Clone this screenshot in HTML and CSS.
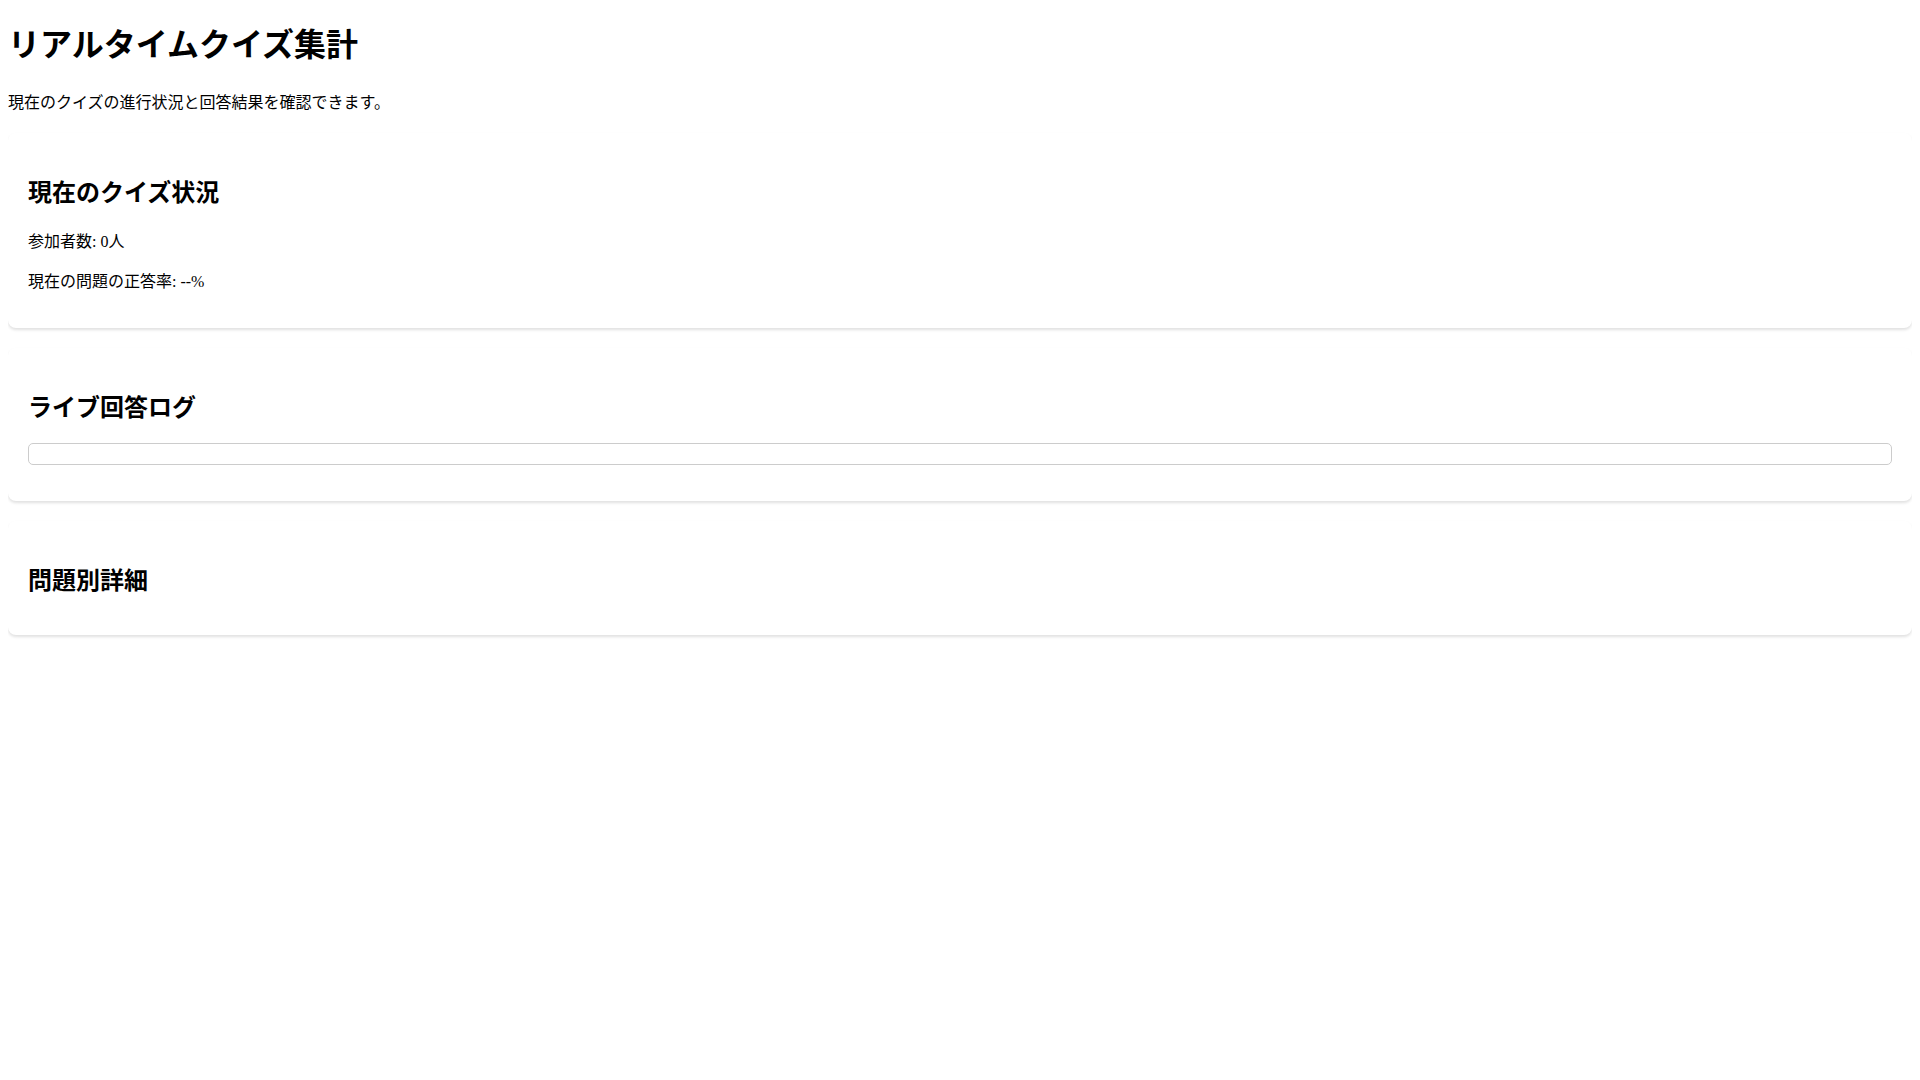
FILE: index.html
```html
<!DOCTYPE html>
<html lang="ja">
<head>
    <meta charset="UTF-8">
    <meta name="viewport" content="width=device-width, initial-scale=1.0">
    <title>リアルタイムクイズ集計</title>
    <link rel="stylesheet" href="styles.css">
</head>
<body>
    <h1>リアルタイムクイズ集計</h1>
    <p>現在のクイズの進行状況と回答結果を確認できます。</p>

    <div class="card" id="quiz-status">
        <h2>現在のクイズ状況</h2>
        <p>参加者数: <span id="participant-count">0</span>人</p>
        <p>現在の問題の正答率: <span id="correct-rate">--</span>%</p>
    </div>

    <div class="card" id="live-log">
        <h2>ライブ回答ログ</h2>
        <div class="log-box" id="log-list"></div>
    </div>

    <div class="card" id="question-detail">
        <h2>問題別詳細</h2>
        <div id="question-list"></div>
    </div>
</body>
</html>
```

FILE: styles.css
```css
body {
    margin: 8px;
    font-family: "Liberation Serif", "Noto Sans CJK JP", serif;
    background-color: #fff;
    color: #000;
}

h1 {
    margin: 11px 0 24px;
}

.card {
    background-color: #fff;
    border-radius: 8px;
    box-shadow: 0 2px 3px rgba(0, 0, 0, 0.12);
    padding: 20px;
    margin: 20px 0;
}

.log-box {
    border: 1px solid #ccc;
    border-radius: 5px;
    padding: 10px;
    margin-bottom: 16px;
    max-height: 300px;
    overflow-y: auto;
}
```
